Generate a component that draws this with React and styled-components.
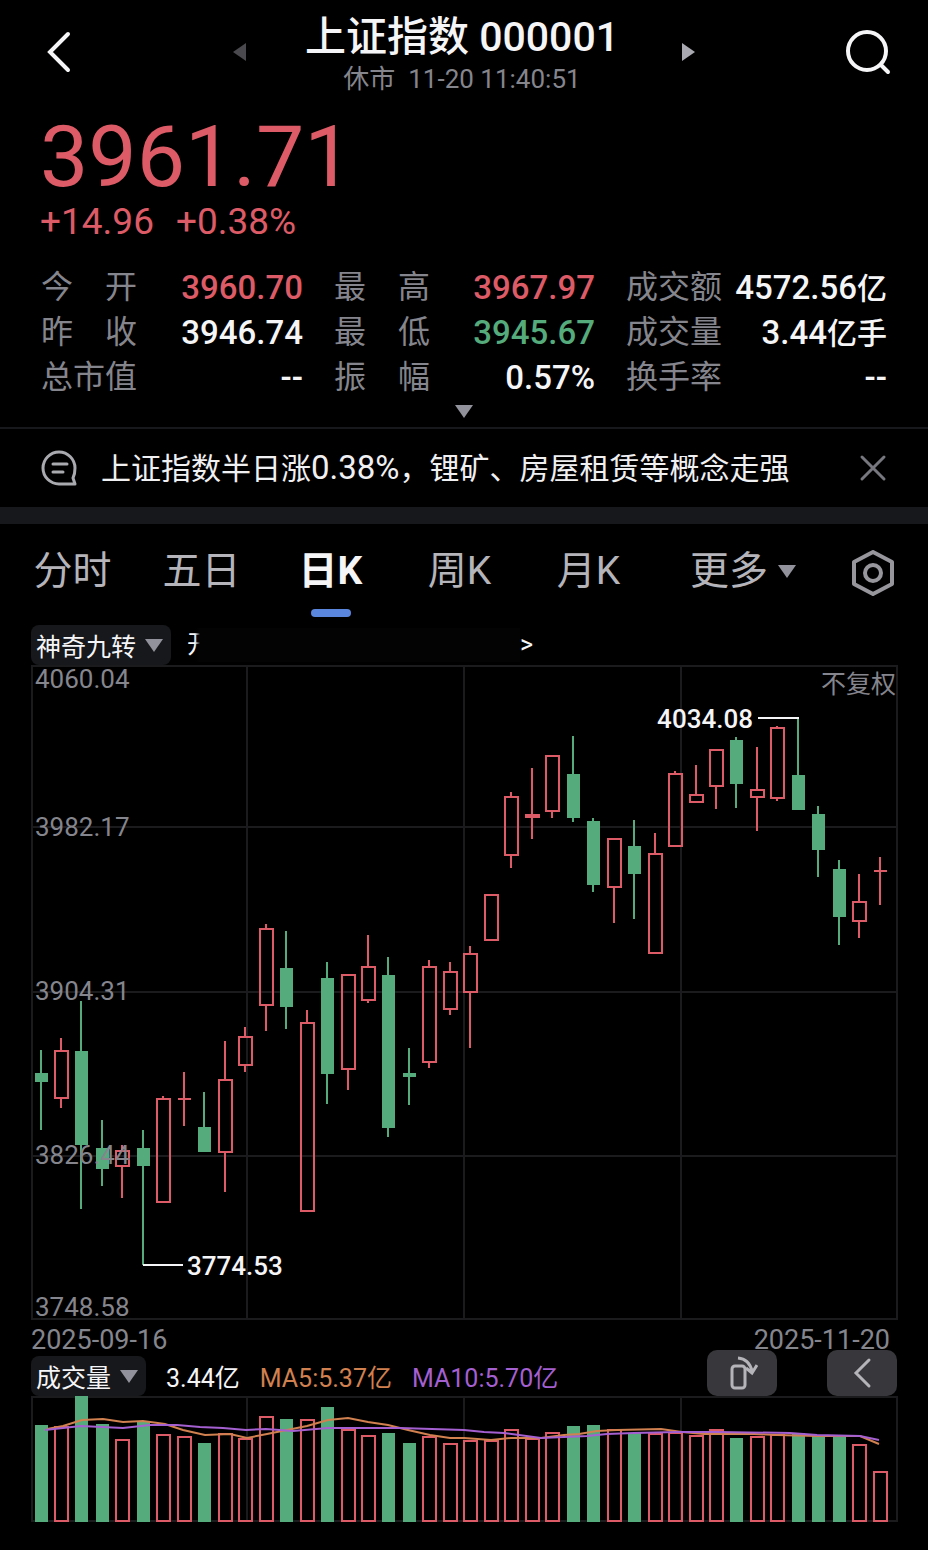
import React from 'react';
import styled, { createGlobalStyle } from 'styled-components';

const RED = '#dc5b66';
const GREEN = '#55ab7b';

const GlobalStyle = createGlobalStyle`
  * {
    box-sizing: border-box;
  }

  body {
    margin: 0;
    background: #000;
    color: #f5f5f8;
    font-family: Roboto, 'Noto Sans CJK SC', sans-serif;
  }

  button {
    padding: 0;
    border: 0;
    background: none;
    color: inherit;
    font: inherit;
    cursor: pointer;
  }

  svg {
    display: block;
  }
`;

const Page = styled.main`
  min-height: 100vh;
  padding-bottom: 28px;
`;

const Header = styled.header`
  display: grid;
  grid-template-columns: 1fr auto 1fr;
  align-items: center;
  height: 104px;
  padding: 0 36px;
`;

const HeaderSide = styled.div`
  display: flex;
  align-items: center;
  justify-content: space-between;
`;

const TitleBlock = styled.div`
  min-width: 436px;
  padding: 6px 4px 0 0;
  text-align: center;
`;

const Title = styled.h1`
  margin: 0;
  font-size: 41px;
  font-weight: 500;
  line-height: 48px;
  white-space: nowrap;
`;

const Subtitle = styled.div`
  color: #85858d;
  font-size: 26px;
  line-height: 36px;
  white-space: pre;
`;

const Quote = styled.section`
  padding: 0 40px;
  color: ${RED};
`;

const Price = styled.div`
  padding-top: 6px;
  font-size: 86px;
  line-height: 94px;
`;

const Changes = styled.div`
  display: flex;
  gap: 22px;
  font-size: 37px;
  line-height: 36px;
`;

const Stats = styled.dl`
  display: grid;
  grid-template-columns: 262fr 261fr 261fr;
  grid-auto-rows: 45px;
  column-gap: 31px;
  margin: 25px 0 0;
  padding: 0 41px;
`;

const Stat = styled.div`
  display: flex;
  align-items: center;
  justify-content: space-between;
  line-height: 45px;
  white-space: nowrap;
`;

const StatName = styled.dt`
  display: flex;
  justify-content: space-between;
  width: 96px;
  color: #85858d;
  font-size: 32px;
`;

const StatValue = styled.dd`
  margin: 0;
  color: ${({ $color }) => $color || 'inherit'};
  font-size: 33px;
  font-weight: 500;
`;

const Unit = styled.span`
  font-size: 30px;
`;

const ExpandButton = styled.button`
  display: flex;
  align-items: center;
  justify-content: center;
  width: 100%;
  height: 27px;
  padding-bottom: 4px;
`;

const News = styled.section`
  display: flex;
  align-items: center;
  height: 97px;
  padding: 0 40px;
  border-top: 2px solid #17181b;
  border-bottom: 17px solid #17181b;
`;

const NewsLink = styled.a`
  flex: 1;
  margin-left: 23px;
  color: #f0f0f3;
  font-size: 30px;
  line-height: 40px;
  text-decoration: none;
  white-space: nowrap;
`;

const NewsNumber = styled.span`
  font-size: 33px;
`;

const Tabs = styled.nav`
  display: grid;
  grid-template-columns: repeat(5, 129fr) 180fr 80fr;
  height: 101px;
  padding: 0 15px 0 8px;
`;

const Tab = styled.button`
  display: flex;
  flex-direction: column;
  align-items: center;
  padding-top: 18px;
  color: ${({ $active }) => ($active ? '#f5f5f8' : '#b4b4ba')};
  font-size: 39px;
  font-weight: ${({ $active }) => ($active ? 700 : 400)};
  line-height: 58px;

  &::after {
    content: '';
    width: 40px;
    height: 8px;
    margin-top: 9px;
    border-radius: 4px;
    background: ${({ $active }) => ($active ? '#5a87dd' : 'transparent')};
  }
`;

const MoreLabel = styled.span`
  display: flex;
  align-items: center;
  gap: 10px;
`;

const IconTab = styled.button`
  display: flex;
  justify-content: center;
  padding-top: 26px;
`;

const Toolbar = styled.div`
  display: flex;
  align-items: center;
  height: 40px;
  padding: 0 31px;
`;

const Picker = styled.button`
  display: flex;
  align-items: center;
  gap: 9px;
  height: 40px;
  padding: 0 8px 0 5px;
  border-radius: 8px;
  background: #17181b;
  font-size: 25px;
  white-space: nowrap;
`;

const Promo = styled.div`
  display: flex;
  align-items: center;
  width: 346px;
  margin-left: 16px;
  font-size: 25px;
  line-height: 40px;
`;

/* soft patch that hides most of the promo line */
const PromoCover = styled.span`
  position: relative;
  flex: 1;
  height: 34px;
  margin-left: -17px;
  background: linear-gradient(90deg, transparent, #030303 5px);
`;

const ChartArea = styled.section`
  margin: 0 30px;

  svg {
    width: 100%;
    height: auto;
    overflow: visible;
  }
`;

const AxisText = styled.text`
  fill: ${({ $bright }) => ($bright ? '#f5f5f8' : '#85858d')};
  font-size: ${({ $small }) => ($small ? 25 : 26)}px;
  font-weight: ${({ $bright }) => ($bright ? 500 : 400)};
`;

const Dates = styled.div`
  display: flex;
  justify-content: space-between;
  padding: 2px 38px 0 31px;
  color: #85858d;
  font-size: 27px;
  line-height: 34px;
`;

const VolumeBar = styled.div`
  display: flex;
  align-items: flex-end;
  justify-content: space-between;
  height: 39px;
  padding: 0 31px;
`;

const Legend = styled.div`
  display: flex;
  align-items: center;
  gap: 20px;
  font-size: 25px;
  white-space: nowrap;
`;

const LegendItem = styled.span`
  color: ${({ $color }) => $color || 'inherit'};
`;

const ToolButtons = styled.div`
  display: flex;
  gap: 50px;
`;

const ToolButton = styled.button`
  display: flex;
  align-items: center;
  justify-content: center;
  width: 70px;
  height: 46px;
  border-radius: 10px;
  background: #38383c;
`;

const stats = [
  { name: '今开', value: '3960.70', color: RED },
  { name: '最高', value: '3967.97', color: RED },
  { name: '成交额', value: '4572.56', unit: '亿' },
  { name: '昨收', value: '3946.74' },
  { name: '最低', value: '3945.67', color: GREEN },
  { name: '成交量', value: '3.44', unit: '亿手' },
  { name: '总市值', value: '--' },
  { name: '振幅', value: '0.57%' },
  { name: '换手率', value: '--' },
];

// [rising, high, body top, body bottom, low, volume top]
const candles = [
  [0, 385, 408, 417, 465, 29],
  [1, 373, 385, 434, 443, 30],
  [0, 336, 386, 480, 544, 0],
  [0, 455, 483, 504, 521, 28],
  [1, 480, 485, 502, 533, 43],
  [0, 465, 483, 501, 600, 26],
  [1, 431, 433, 538, 538, 38],
  [1, 407, 433, 435, 461, 40],
  [0, 427, 462, 487, 487, 47],
  [1, 376, 414, 488, 527, 37],
  [1, 362, 371, 401, 407, 42],
  [1, 259, 263, 341, 366, 20],
  [0, 266, 303, 342, 364, 23],
  [1, 345, 357, 547, 547, 23],
  [0, 297, 313, 409, 439, 11],
  [1, 309, 309, 405, 425, 33],
  [1, 270, 301, 336, 338, 39],
  [0, 292, 310, 463, 472, 37],
  [0, 383, 408, 412, 440, 47],
  [1, 295, 301, 398, 403, 40],
  [1, 297, 306, 345, 350, 47],
  [1, 281, 288, 328, 383, 44],
  [1, 229, 229, 276, 276, 44],
  [1, 127, 131, 191, 203, 33],
  [1, 103, 149, 153, 174, 42],
  [1, 90, 90, 147, 153, 36],
  [0, 71, 109, 153, 157, 30],
  [0, 153, 156, 220, 227, 29],
  [1, 173, 173, 223, 258, 33],
  [0, 155, 181, 209, 254, 37],
  [1, 168, 188, 289, 289, 37],
  [1, 106, 108, 182, 182, 36],
  [1, 100, 129, 138, 138, 39],
  [1, 84, 84, 122, 144, 33],
  [0, 72, 75, 119, 143, 42],
  [1, 82, 124, 133, 166, 40],
  [1, 61, 62, 134, 136, 38],
  [0, 53, 110, 145, 145, 37],
  [0, 141, 149, 185, 212, 39],
  [0, 195, 204, 252, 280, 40],
  [1, 209, 236, 257, 273, 48],
  [1, 192, 205, 207, 240, 75],
];

const ma5 =
  '17,33 33,30 52,24 73,23 93,26 113,25 135,28 153,34 175,39 200,38 217,42 237,38 257,34 277,30 298,24 318,22 338,26 358,29 378,34 400,39 420,42 434,42 461,44 481,42 511,42 534,39 549,38 567,35 587,34 631,33 652,36 674,38 724,38 747,39 787,40 830,40 849,48';
const ma10 =
  '15,34 51,30 93,32 120,29 147,29 170,31 193,32 216,34 236,33 263,35 298,32 370,32 434,34 454,36 474,37 511,42 557,40 577,38 604,37 647,36 687,36 760,37 787,39 830,40 849,44';

const centerOf = (index) => Math.round(10.5 + index * 20.47);

const Triangle = () => (
  <svg width='18' height='13' viewBox='0 0 18 13' aria-hidden='true'>
    <path d='M0 0h18L9 13z' fill='#92929c' />
  </svg>
);

const Bar = ({ x, top, bottom, rising }) => {
  if (!rising) {
    return <rect x={x - 6} y={top} width='13' height={bottom - top} fill={GREEN} />;
  }
  if (bottom - top < 3) {
    return <rect x={x - 6} y={top} width='13' height='2' fill={RED} />;
  }
  return (
    <rect x={x - 6} y={top + 1} width='13' height={bottom - top - 2} fill='none' stroke={RED} strokeWidth='2' />
  );
};

const Candle = ({ x, data }) => {
  const [rising, high, top, bottom, low] = data;
  const color = rising ? RED : GREEN;
  return (
    <g>
      <path d={`M${x} ${high}V${top}M${x} ${bottom}V${low}`} stroke={color} strokeWidth='2' />
      <Bar x={x} top={top} bottom={bottom} rising={rising} />
    </g>
  );
};

const PriceChart = () => {
  return (
    <ChartArea>
      <svg viewBox='0 0 868 656' role='img' aria-label='日K'>
        <path
          d='M2 1H867V654H2zM217 1V654M434 1V654M651 1V654M2 162H867M2 327H867M2 491H867'
          fill='none'
          stroke='#1b1b1d'
          strokeWidth='2'
        />
        {candles.map((data, index) => (
          <Candle key={index} x={centerOf(index)} data={data} />
        ))}
        <AxisText x='5' y='23'>4060.04</AxisText>
        <AxisText x='5' y='171'>3982.17</AxisText>
        <AxisText x='5' y='335'>3904.31</AxisText>
        <AxisText x='5' y='499'>3826.44</AxisText>
        <AxisText x='5' y='651'>3748.58</AxisText>
        <AxisText $small x='866' y='28' textAnchor='end'>不复权</AxisText>
        <path d='M728 53H769M113 600H153' stroke='#f5f5f8' strokeWidth='2' />
        <AxisText $bright x='723' y='63' textAnchor='end'>4034.08</AxisText>
        <AxisText $bright x='157' y='610'>3774.53</AxisText>
      </svg>
    </ChartArea>
  );
};

const VolumeChart = () => {
  return (
    <ChartArea>
      <svg viewBox='0 0 868 126' role='img' aria-label='成交量'>
        <path d='M2 1H867V125H2zM217 1V125M434 1V125M651 1V125' fill='none' stroke='#1b1b1d' strokeWidth='2' />
        {candles.map((data, index) => (
          <Bar key={index} x={centerOf(index)} top={data[5]} bottom={126} rising={data[0]} />
        ))}
        <polyline points={ma5} fill='none' stroke='#d1804f' strokeWidth='2' />
        <polyline points={ma10} fill='none' stroke='#a45fd0' strokeWidth='2' />
      </svg>
    </ChartArea>
  );
};

const App = () => {
  return (
    <>
      <GlobalStyle />
      <Page>
        <Header>
          <HeaderSide>
            <button type='button' aria-label='返回'>
              <svg width='38' height='44' viewBox='0 0 38 44' fill='none' stroke='#f5f5f8' strokeWidth='4' strokeLinecap='round'>
                <path d='M32 4L14 22L32 40' />
              </svg>
            </button>
            <button type='button' aria-label='上一个'>
              <svg width='13' height='18' viewBox='0 0 13 18'>
                <path d='M13 0V18L0 9z' fill='#4a4a4e' />
              </svg>
            </button>
          </HeaderSide>
          <TitleBlock>
            <Title>上证指数 000001</Title>
            <Subtitle>休市  11-20 11:40:51</Subtitle>
          </TitleBlock>
          <HeaderSide>
            <button type='button' aria-label='下一个'>
              <svg width='13' height='18' viewBox='0 0 13 18'>
                <path d='M0 0V18L13 9z' fill='#a9a9b2' />
              </svg>
            </button>
            <button type='button' aria-label='搜索'>
              <svg width='48' height='48' viewBox='0 0 48 48' fill='none' stroke='#f5f5f8' strokeWidth='4' strokeLinecap='round'>
                <circle cx='23' cy='23' r='19' />
                <path d='M37 37L44 44' />
              </svg>
            </button>
          </HeaderSide>
        </Header>

        <Quote>
          <Price>3961.71</Price>
          <Changes>
            <span>+14.96</span>
            <span>+0.38%</span>
          </Changes>
        </Quote>

        <Stats>
          {stats.map(({ name, value, unit, color }) => (
            <Stat key={name}>
              <StatName>
                {name.split('').map((char) => (
                  <span key={char}>{char}</span>
                ))}
              </StatName>
              <StatValue $color={color}>
                {value}
                {unit && <Unit>{unit}</Unit>}
              </StatValue>
            </Stat>
          ))}
        </Stats>
        <ExpandButton type='button' aria-label='展开'>
          <Triangle />
        </ExpandButton>

        <News>
          <svg width='38' height='38' viewBox='0 0 38 38' fill='none' stroke='#a9a9b0' strokeWidth='3' strokeLinecap='round' strokeLinejoin='round'>
            <path d='M19 3A16 16 0 1 0 19 35H35L33 29Q35 25 35 19A16 16 0 0 0 19 3z' />
            <path d='M13 15H27M13 23H23' />
          </svg>
          <NewsLink href='#'>
            上证指数半日涨<NewsNumber>0.38%</NewsNumber>，锂矿、房屋租赁等概念走强
          </NewsLink>
          <button type='button' aria-label='关闭'>
            <svg width='30' height='30' viewBox='0 0 30 30' stroke='#77777f' strokeWidth='3' strokeLinecap='round'>
              <path d='M4 4L26 26M26 4L4 26' />
            </svg>
          </button>
        </News>

        <Tabs>
          <Tab type='button'>分时</Tab>
          <Tab type='button'>五日</Tab>
          <Tab type='button' $active>日K</Tab>
          <Tab type='button'>周K</Tab>
          <Tab type='button'>月K</Tab>
          <Tab type='button'>
            <MoreLabel>
              更多
              <Triangle />
            </MoreLabel>
          </Tab>
          <IconTab type='button' aria-label='设置'>
            <svg width='44' height='46' viewBox='0 0 44 46' fill='none' stroke='#96969c' strokeWidth='4' strokeLinejoin='round'>
              <path d='M22 2L41 12V34L22 44L3 34V12z' />
              <circle cx='22' cy='23' r='8' />
            </svg>
          </IconTab>
        </Tabs>

        <Toolbar>
          <Picker type='button'>
            神奇九转
            <Triangle />
          </Picker>
          <Promo>
            <span>开</span>
            <PromoCover />
            <span>&gt;</span>
          </Promo>
        </Toolbar>

        <PriceChart />
        <Dates>
          <span>2025-09-16</span>
          <span>2025-11-20</span>
        </Dates>

        <VolumeBar>
          <Legend>
            <Picker type='button'>
              成交量
              <Triangle />
            </Picker>
            <LegendItem>3.44亿</LegendItem>
            <LegendItem $color='#d1804f'>MA5:5.37亿</LegendItem>
            <LegendItem $color='#a45fd0'>MA10:5.70亿</LegendItem>
          </Legend>
          <ToolButtons>
            <ToolButton type='button' aria-label='旋转'>
              <svg width='32' height='36' viewBox='0 0 32 36' fill='none' stroke='#b4b4b9' strokeWidth='3'>
                <rect x='6' y='11' width='13' height='22' rx='3' />
                <path d='M12 3Q23 4 26 16M20 13L26 18L31 10' />
              </svg>
            </ToolButton>
            <ToolButton type='button' aria-label='收起'>
              <svg width='20' height='32' viewBox='0 0 20 32' fill='none' stroke='#b4b4b9' strokeWidth='3' strokeLinecap='round'>
                <path d='M17 3L4 16L17 29' />
              </svg>
            </ToolButton>
          </ToolButtons>
        </VolumeBar>
        <VolumeChart />
      </Page>
    </>
  );
};

export default App;
